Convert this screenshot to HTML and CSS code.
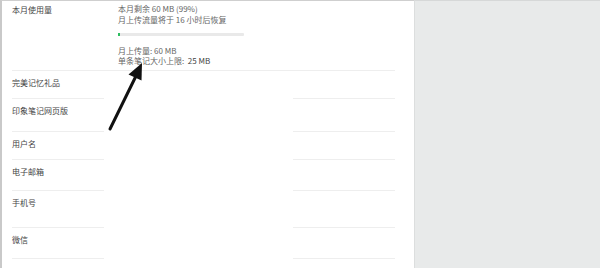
FILE: index.html
```html
<!DOCTYPE html>
<html lang="zh-CN">
<head>
<meta charset="utf-8">
<link rel="stylesheet" href="styles.css">
</head>
<body>
<div class="main">
  <div class="usage">
    <div class="label">本月使用量</div>
    <div class="usage-body">
      <div class="line">本月剩余 60 MB (99%)</div>
      <div class="line">月上传流量将于 16 小时后恢复</div>
      <div class="bar"><div class="fill" style="width:2px"></div></div>
      <div class="line">月上传量: 60 MB</div>
      <div class="line">单条笔记大小上限: &nbsp;<span class="dark">25 MB</span></div>
    </div>
  </div>
  <div class="row h28"><div class="label cell">完美记忆礼品</div><div class="mid"></div><div class="cell"></div></div>
  <div class="row h33"><div class="label cell">印象笔记网页版</div><div class="mid"></div><div class="cell"></div></div>
  <div class="row h28"><div class="label cell">用户名</div><div class="mid"></div><div class="cell"></div></div>
  <div class="row h31"><div class="label cell">电子邮箱</div><div class="mid"></div><div class="cell"></div></div>
  <div class="row h37"><div class="label cell">手机号</div><div class="mid"></div><div class="cell"></div></div>
  <div class="row h31"><div class="label cell">微信</div><div class="mid"></div><div class="cell"></div></div>
</div>
<div class="panel"></div>
<svg class="arrow" width="600" height="268" viewBox="0 0 600 268">
  <line x1="110" y1="129" x2="136" y2="76" stroke="#111" stroke-width="3" stroke-linecap="round"/>
  <polygon points="142,63 128.5,74.5 141.5,80.5" fill="#111"/>
</svg>
</body>
</html>
```
FILE: styles.css
```css
html, body {
  margin: 0;
  padding: 0;
  height: 268px;
  overflow: hidden;
}
body {
  display: flex;
  font-family: "Noto Sans CJK SC", "Open Sans", sans-serif;
  font-size: 8px;
  color: #555;
  background: #fff;
  position: relative;
}
.main {
  width: 402px;
  flex: none;
  height: 267px;
  border-top: 1px solid #cfcfcf;
  border-left: 2px solid #c9c9c9;
  padding-left: 10px;
  box-sizing: content-box;
}
.panel {
  flex: 1;
  height: 268px;
  background: #e8eaea;
  border-left: 1px solid #dcdede;
  border-top: 1px solid #d6d8d8;
  box-sizing: border-box;
}
.usage {
  width: 383px;
  height: 70px;
  display: flex;
  border-bottom: 1px solid #eeeeee;
  box-sizing: border-box;
}
.usage > .label {
  width: 106px;
  padding-top: 3px;
}
.label {
  color: #444;
  line-height: 11px;
}
.usage-body {
  padding-top: 2px;
  color: #666;
}
.line {
  line-height: 11px;
  height: 11px;
}
.line:nth-of-type(4) { height: 10px; }
.dark { color: #444; }
.bar {
  width: 126px;
  height: 3px;
  background: #e9e9e9;
  margin-top: 8px;
  margin-bottom: 9px;
  border-radius: 1px;
}
.fill {
  height: 3px;
  background: #2dbe60;
}
.row {
  width: 383px;
  display: flex;
}
.cell {
  border-bottom: 1px solid #eeeeee;
  box-sizing: border-box;
}
.row > .label {
  width: 92px;
  padding-top: 6px;
}
.mid { width: 189px; }
.row > .cell:last-child { width: 102px; }
.h28 { height: 28px; }
.h33 { height: 33px; }
.h31 { height: 31px; }
.h37 { height: 37px; }
.arrow {
  position: absolute;
  left: 0;
  top: 0;
  pointer-events: none;
}
```
